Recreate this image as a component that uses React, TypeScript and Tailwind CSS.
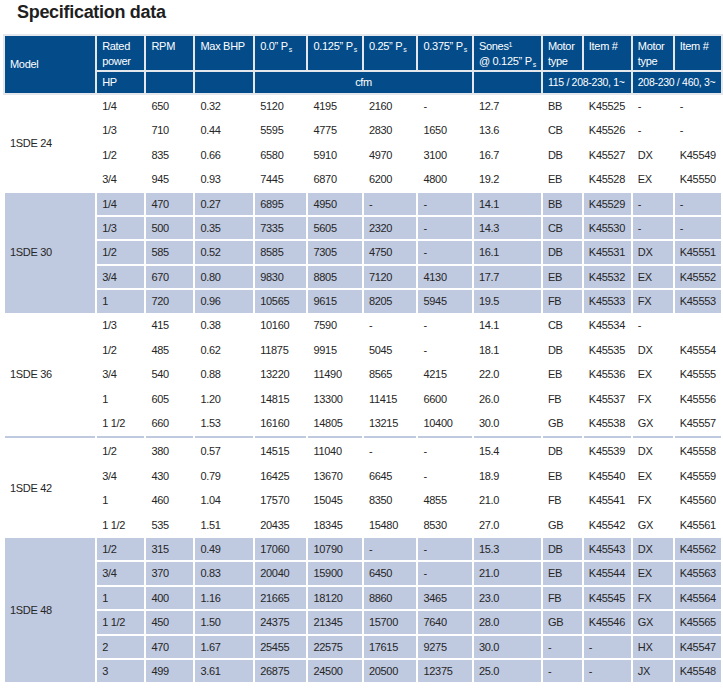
import type { ReactNode } from 'react';

type Section = {
  model: string;
  blue: boolean;
  rows: string[][];
};

const sections: Section[] = [
  {
    model: '1SDE 24',
    blue: false,
    rows: [
      ['1/4', '650', '0.32', '5120', '4195', '2160', '-', '12.7', 'BB', 'K45525', '-', '-'],
      ['1/3', '710', '0.44', '5595', '4775', '2830', '1650', '13.6', 'CB', 'K45526', '-', '-'],
      ['1/2', '835', '0.66', '6580', '5910', '4970', '3100', '16.7', 'DB', 'K45527', 'DX', 'K45549'],
      ['3/4', '945', '0.93', '7445', '6870', '6200', '4800', '19.2', 'EB', 'K45528', 'EX', 'K45550'],
    ],
  },
  {
    model: '1SDE 30',
    blue: true,
    rows: [
      ['1/4', '470', '0.27', '6895', '4950', '-', '-', '14.1', 'BB', 'K45529', '-', '-'],
      ['1/3', '500', '0.35', '7335', '5605', '2320', '-', '14.3', 'CB', 'K45530', '-', '-'],
      ['1/2', '585', '0.52', '8585', '7305', '4750', '-', '16.1', 'DB', 'K45531', 'DX', 'K45551'],
      ['3/4', '670', '0.80', '9830', '8805', '7120', '4130', '17.7', 'EB', 'K45532', 'EX', 'K45552'],
      ['1', '720', '0.96', '10565', '9615', '8205', '5945', '19.5', 'FB', 'K45533', 'FX', 'K45553'],
    ],
  },
  {
    model: '1SDE 36',
    blue: false,
    rows: [
      ['1/3', '415', '0.38', '10160', '7590', '-', '-', '14.1', 'CB', 'K45534', '-', ''],
      ['1/2', '485', '0.62', '11875', '9915', '5045', '-', '18.1', 'DB', 'K45535', 'DX', 'K45554'],
      ['3/4', '540', '0.88', '13220', '11490', '8565', '4215', '22.0', 'EB', 'K45536', 'EX', 'K45555'],
      ['1', '605', '1.20', '14815', '13300', '11415', '6600', '26.0', 'FB', 'K45537', 'FX', 'K45556'],
      ['1 1/2', '660', '1.53', '16160', '14805', '13215', '10400', '30.0', 'GB', 'K45538', 'GX', 'K45557'],
    ],
  },
  {
    model: '1SDE 42',
    blue: false,
    rows: [
      ['1/2', '380', '0.57', '14515', '11040', '-', '-', '15.4', 'DB', 'K45539', 'DX', 'K45558'],
      ['3/4', '430', '0.79', '16425', '13670', '6645', '-', '18.9', 'EB', 'K45540', 'EX', 'K45559'],
      ['1', '460', '1.04', '17570', '15045', '8350', '4855', '21.0', 'FB', 'K45541', 'FX', 'K45560'],
      ['1 1/2', '535', '1.51', '20435', '18345', '15480', '8530', '27.0', 'GB', 'K45542', 'GX', 'K45561'],
    ],
  },
  {
    model: '1SDE 48',
    blue: true,
    rows: [
      ['1/2', '315', '0.49', '17060', '10790', '-', '-', '15.3', 'DB', 'K45543', 'DX', 'K45562'],
      ['3/4', '370', '0.83', '20040', '15900', '6450', '-', '21.0', 'EB', 'K45544', 'EX', 'K45563'],
      ['1', '400', '1.16', '21665', '18120', '8860', '3465', '23.0', 'FB', 'K45545', 'FX', 'K45564'],
      ['1 1/2', '450', '1.50', '24375', '21345', '15700', '7640', '28.0', 'GB', 'K45546', 'GX', 'K45565'],
      ['2', '470', '1.67', '25455', '22575', '17615', '9275', '30.0', '-', '-', 'HX', 'K45547'],
      ['3', '499', '3.61', '26875', '24500', '20500', '12375', '25.0', '-', '-', 'JX', 'K45548'],
    ],
  },
];

const colWidths = [95, 50, 50, 60, 54, 54, 55, 54, 66, 41, 49, 42, 48];

function Ps() {
  return (
    <>
      P<sub className="text-[7px] ml-[1px]">s</sub>
    </>
  );
}

function Th({
  children,
  rowSpan,
  colSpan,
  center = false,
  className = '',
}: {
  children?: ReactNode;
  rowSpan?: number;
  colSpan?: number;
  center?: boolean;
  className?: string;
}) {
  return (
    <th
      rowSpan={rowSpan}
      colSpan={colSpan}
      className={`border-2 border-[#e4e7ec] bg-[#044c89] px-[5px] font-normal text-white leading-[15px] whitespace-nowrap ${
        center ? 'text-center' : 'text-left'
      } ${className}`}
    >
      {children}
    </th>
  );
}

export default function App() {
  return (
    <div className="w-[723px] h-[689px] bg-white overflow-hidden text-[#262626] font-['Liberation_Sans',Arial,sans-serif] tracking-[-0.3px]">
      <h1 className="pl-[17px] h-[34px] text-[18px] font-bold leading-[24px] text-[#1f1f1f]">
        Specification data
      </h1>

      <table className="ml-[3px] table-fixed border-collapse text-[11px]">
        <colgroup>
          {colWidths.map((w, i) => (
            <col key={i} style={{ width: w }} />
          ))}
        </colgroup>
        <thead>
          <tr className="h-[36px]">
            <Th rowSpan={2} className="align-middle">Model</Th>
            <Th className="align-top pt-[3px]">Rated<br />power</Th>
            <Th className="align-top pt-[3px]">RPM</Th>
            <Th className="align-top pt-[3px]">Max BHP</Th>
            <Th className="align-top pt-[3px]">0.0” <Ps /></Th>
            <Th className="align-top pt-[3px]">0.125” <Ps /></Th>
            <Th className="align-top pt-[3px]">0.25” <Ps /></Th>
            <Th className="align-top pt-[3px]">0.375” <Ps /></Th>
            <Th className="align-top pt-[3px]">
              Sones<sup className="text-[7px]">1</sup>
              <br />@ 0.125” <Ps />
            </Th>
            <Th className="align-top pt-[3px]">Motor<br />type</Th>
            <Th className="align-top pt-[3px]">Item #</Th>
            <Th className="align-top pt-[3px]">Motor<br />type</Th>
            <Th className="align-top pt-[3px]">Item #</Th>
          </tr>
          <tr className="h-[23px]">
            <Th>HP</Th>
            <Th />
            <Th />
            <Th colSpan={4} center>cfm</Th>
            <Th />
            <Th colSpan={2} className="text-[10.5px]">115 / 208-230, 1~</Th>
            <Th colSpan={2} className="text-[10.5px]">208-230 / 460, 3~</Th>
          </tr>
        </thead>
        <tbody>
          {sections.map((section, si) => {
            const prev = sections[si - 1];
            const needsSeparator = prev && !prev.blue && !section.blue;
            const bg = section.blue ? 'bg-[#bfc9e0]' : 'bg-white';
            return [
              needsSeparator && (
                <tr key={`sep-${si}`} className="h-[4px]">
                  {colWidths.map((_, ci) => (
                    <td key={ci} className="h-[4px] p-0 border-x-2 border-white bg-[#bfc9e0]" />
                  ))}
                </tr>
              ),
              ...section.rows.map((row, ri) => (
                <tr key={`${si}-${ri}`} className="h-[24.4px]">
                  {ri === 0 && (
                    <td rowSpan={section.rows.length} className={`border-2 border-white px-[5px] align-middle whitespace-nowrap ${bg}`}>
                      {section.model}
                    </td>
                  )}
                  {row.map((cell, ci) => (
                    <td key={ci} className={`border-2 border-white px-[5px] py-0 align-middle whitespace-nowrap ${bg}`}>
                      {cell}
                    </td>
                  ))}
                </tr>
              )),
            ];
          })}
        </tbody>
      </table>
    </div>
  );
}
